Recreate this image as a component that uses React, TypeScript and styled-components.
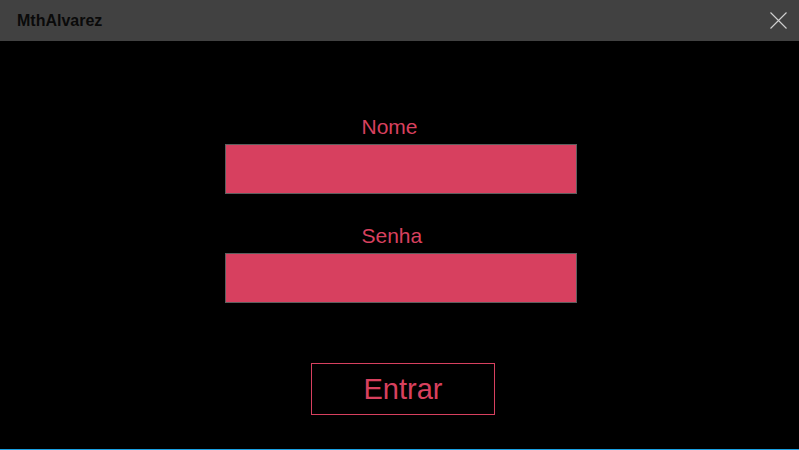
import React from 'react';
import styled, { createGlobalStyle } from 'styled-components';

const GlobalStyle = createGlobalStyle`
  html, body {
    margin: 0;
    padding: 0;
    background: #000000;
    font-family: "Liberation Sans", Arial, sans-serif;
  }
`;

const Window = styled.div`
  width: 799px;
  height: 450px;
  display: flex;
  flex-direction: column;
  background: #000000;
  border-bottom: 1px solid #1ba1e2;
  box-sizing: border-box;
`;

const TitleBar = styled.header`
  height: 41px;
  flex-shrink: 0;
  display: flex;
  align-items: center;
  justify-content: space-between;
  padding: 0 12px 0 17px;
  background: #414141;
`;

const Title = styled.span`
  font-size: 16px;
  font-weight: bold;
  color: #0a0a0a;
`;

const CloseButton = styled.button`
  width: 18px;
  height: 18px;
  padding: 0;
  border: none;
  background: none;
  display: flex;
  align-items: center;
  justify-content: center;
  cursor: pointer;
`;

const Form = styled.main`
  flex: 1;
  display: flex;
  flex-direction: column;
  align-items: center;
  padding-top: 74px;
  padding-left: 2px;
`;

const Field = styled.div<{ gap?: number }>`
  width: 352px;
  display: flex;
  flex-direction: column;
  margin-top: ${p => p.gap ?? 0}px;
`;

const Label = styled.label`
  font-size: 21px;
  line-height: 24px;
  color: #d8405e;
  padding-left: 137px;
  margin-bottom: 5px;
`;

const Input = styled.input`
  height: 50px;
  box-sizing: border-box;
  border: 1px solid #5e5e5e;
  background: #d7405f;
  outline: none;
  font-size: 18px;
  color: #000;
  padding: 0 8px;
`;

const SubmitButton = styled.button`
  width: 184px;
  height: 52px;
  margin-top: 60px;
  margin-left: 5px;
  box-sizing: border-box;
  border: 1px solid #d7405f;
  background: transparent;
  color: #d8405e;
  font-family: "Liberation Sans", Arial, sans-serif;
  font-size: 29px;
  cursor: pointer;
`;

export default function App() {
  return (
    <>
      <GlobalStyle />
      <Window>
        <TitleBar>
          <Title>MthAlvarez</Title>
          <CloseButton aria-label="Fechar">
            <svg width="17" height="17" viewBox="0 0 17 17">
              <path d="M0.5 0.5 L16.5 16.5 M16.5 0.5 L0.5 16.5" stroke="#d0d0d0" strokeWidth="1.1" />
            </svg>
          </CloseButton>
        </TitleBar>
        <Form>
          <Field>
            <Label>Nome</Label>
            <Input />
          </Field>
          <Field gap={30}>
            <Label>Senha</Label>
            <Input type="password" />
          </Field>
          <SubmitButton>Entrar</SubmitButton>
        </Form>
      </Window>
    </>
  );
}
